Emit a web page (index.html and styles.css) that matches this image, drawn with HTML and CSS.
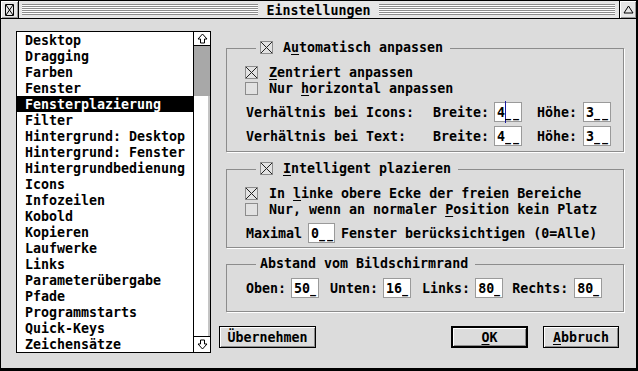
FILE: index.html
```html
<!DOCTYPE html>
<html lang="de">
<head>
  <meta charset="UTF-8"/>
  <title>Einstellungen</title>
  <link rel="stylesheet" href="styles.css">
</head>
<body>

  <div class="window">
    <!-- title bar -->
    <div class="titlebar">
      <div class="closer">
        <svg width="9" height="12" viewBox="0 0 9 12"><path d="M0.5 0.5H8.5V11.5H0.5Z M1 1L8 11 M8 1L1 11" fill="none" stroke="#000"/></svg>
      </div>
      <div class="title">
        <span class="stripes"></span>
        <span class="title-text">Einstellungen</span>
        <span class="stripes"></span>
      </div>
      <div class="fuller">
        <svg width="11" height="9" viewBox="0 0 11 9"><path d="M5.5 1L10 8H1Z" fill="none" stroke="#000"/></svg>
      </div>
    </div>

    <div class="content">
      <!-- category list -->
      <div class="listbox">
        <ul class="items">
          <li>Desktop</li>
          <li>Dragging</li>
          <li>Farben</li>
          <li>Fenster</li>
          <li class="sel">Fensterplazierung</li>
          <li>Filter</li>
          <li>Hintergrund: Desktop</li>
          <li>Hintergrund: Fenster</li>
          <li>Hintergrundbedienung</li>
          <li>Icons</li>
          <li>Infozeilen</li>
          <li>Kobold</li>
          <li>Kopieren</li>
          <li>Laufwerke</li>
          <li>Links</li>
          <li>Parameterübergabe</li>
          <li>Pfade</li>
          <li>Programmstarts</li>
          <li>Quick-Keys</li>
          <li>Zeichensätze</li>
        </ul>
        <div class="scrollbar">
          <div class="arrow up">
            <svg width="11" height="11" viewBox="0 0 11 11"><path d="M5.5 1L10 6H7.5V10H3.5V6H1Z" fill="none" stroke="#000"/></svg>
          </div>
          <div class="track"><div class="thumb"></div></div>
          <div class="arrow down">
            <svg width="11" height="11" viewBox="0 0 11 11"><path d="M5.5 10L10 5H7.5V1H3.5V5H1Z" fill="none" stroke="#000"/></svg>
          </div>
        </div>
      </div>

      <!-- settings -->
      <div class="panel">
        <fieldset class="group g1">
          <legend>
            <span class="check"><svg width="13" height="13" viewBox="0 0 13 13"><path d="M1 1L12 12M12 1L1 12" stroke="#222"/></svg></span>A<u>u</u>tomatisch anpassen
          </legend>
          <div class="crow">
            <span class="check"><svg width="13" height="13" viewBox="0 0 13 13"><path d="M1 1L12 12M12 1L1 12" stroke="#222"/></svg></span><u>Z</u>entriert anpassen
          </div>
          <div class="crow">
            <span class="check"></span>Nur <u>h</u>orizontal anpassen
          </div>
          <div class="frow first">
            <span class="lbl">Verhältnis bei Icons:</span>
            <span>Breite:</span><span class="field f-b">4<span class="caret"></span><span class="us">_</span><span class="us">_</span></span>
            <span class="k-h">Höhe:</span><span class="field f-h">3<span class="us">_</span><span class="us">_</span></span>
          </div>
          <div class="frow">
            <span class="lbl">Verhältnis bei Text:</span>
            <span>Breite:</span><span class="field f-b">4<span class="us">_</span><span class="us">_</span></span>
            <span class="k-h">Höhe:</span><span class="field f-h">3<span class="us">_</span><span class="us">_</span></span>
          </div>
        </fieldset>

        <fieldset class="group g2">
          <legend>
            <span class="check"><svg width="13" height="13" viewBox="0 0 13 13"><path d="M1 1L12 12M12 1L1 12" stroke="#222"/></svg></span><u>I</u>ntelligent plazieren
          </legend>
          <div class="crow">
            <span class="check"><svg width="13" height="13" viewBox="0 0 13 13"><path d="M1 1L12 12M12 1L1 12" stroke="#222"/></svg></span>In <u>l</u>inke obere Ecke der freien Bereiche
          </div>
          <div class="crow">
            <span class="check"></span>Nur, wenn an normaler <u>P</u>osition kein Platz
          </div>
          <div class="frow first">
            <span class="lbl-m">Maximal</span><span class="field f-m">0<span class="us">_</span><span class="us">_</span></span><span class="after-m">Fenster berücksichtigen (0=Alle)</span>
          </div>
        </fieldset>

        <fieldset class="group g3">
          <legend>Abstand vom Bildschirmrand</legend>
          <div class="frow">
            <span class="lbl-m">Oben:</span><span class="field f-e">50<span class="us">_</span></span>
            <span class="k-u">Unten:</span><span class="field f-e">16<span class="us">_</span></span>
            <span class="k-l">Links:</span><span class="field f-e">80<span class="us">_</span></span>
            <span class="k-r">Rechts:</span><span class="field f-r">80<span class="us">_</span></span>
          </div>
        </fieldset>

        <div class="buttons">
          <button class="btn b-apply">Übernehmen</button>
          <button class="btn b-ok"><u>O</u>K</button>
          <button class="btn b-cancel"><u>A</u>bbruch</button>
        </div>
      </div>
    </div>
  </div>

</body>
</html>
```

FILE: styles.css
```css
body {
  margin: 0;
  background-color: #dcdcdc;
  font-family: "DejaVu Sans Mono", "Liberation Mono", monospace;
  font-size: 13.3px;
  font-weight: bold;
  color: #000;
}
.window {
  width: 638px;
  height: 371px;
  box-sizing: border-box;
  border: 1px solid #000;
  border-right-width: 2px;
  border-bottom-width: 3px;
  background-color: #dcdcdc;
  display: flex;
  flex-direction: column;
}

/* title bar */
.titlebar {
  display: flex;
  height: 17px;
  border-bottom: 1px solid #000;
  background-color: #e6e6e6;
}
.closer {
  width: 17px;
  border-right: 1px solid #000;
  display: flex;
  align-items: center;
  justify-content: center;
  box-shadow: inset 1px 1px 0 #fff, inset -1px -1px 0 #9a9a9a;
}
.title {
  flex: 1;
  display: flex;
  align-items: center;
  gap: 8px;
  padding: 0 4px 0 3px;
}
.stripes {
  flex: 1;
  height: 11px;
  background: repeating-linear-gradient(to bottom, #8c8c8c 0 1px, #fff 1px 2px);
}
.title-text {
  line-height: 16px;
  padding-top: 2px;
}
.fuller {
  width: 16px;
  border-left: 1px solid #000;
  display: flex;
  align-items: center;
  justify-content: center;
  box-shadow: inset 1px 1px 0 #fff, inset -1px -1px 0 #9a9a9a;
}

.content {
  flex: 1;
  display: flex;
  align-items: flex-start;
  padding: 12px 0 0 15px;
}

/* list */
.listbox {
  width: 195px;
  height: 322px;
  box-sizing: border-box;
  border: 1px solid #000;
  background-color: #fff;
  display: flex;
}
.items {
  width: 176px;
  margin: 0;
  padding: 0;
  list-style: none;
}
.items li {
  height: 16px;
  box-sizing: border-box;
  padding: 1px 0 0 8px;
  line-height: 16px;
  white-space: nowrap;
}
.items li.sel {
  background-color: #000;
  color: #fff;
}
.scrollbar {
  width: 17px;
  box-sizing: border-box;
  border-left: 1px solid #000;
  display: flex;
  flex-direction: column;
}
.arrow {
  display: flex;
  align-items: center;
  justify-content: center;
  background-color: #fff;
}
.arrow.up {
  height: 13px;
  border-bottom: 1px solid #000;
}
.arrow.down {
  height: 15px;
  border-top: 1px solid #000;
}
.track {
  flex: 1;
  background-color: #fff;
  box-shadow: inset -2px 0 0 #c4c4c4;
}
.thumb {
  height: 50px;
  background-color: #a8a8a8;
}

/* right side */
.panel {
  width: 405px;
  margin: 9px 0 0 8px;
}
.group {
  width: 398px;
  box-sizing: border-box;
  margin: 0 0 0 7px;
  padding: 8px 0 5px 18px;
  border: 1px solid #8c8c8c;
  box-shadow: 1px 1px 0 #fff;
  min-width: 0;
}
.group legend {
  margin-left: 11px;
  padding: 0 7px 0 4px;
  line-height: 16px;
  white-space: nowrap;
}
.g2 {
  margin-top: 9px;
  padding-bottom: 4px;
}
.g3 {
  margin-top: 8px;
  padding: 2px 0 13px 18px;
}
.check {
  display: inline-block;
  width: 13px;
  height: 13px;
  box-sizing: border-box;
  border: 1px solid #8c8c8c;
  background-color: #e2e2e2;
  vertical-align: -2px;
  margin-right: 11px;
}
.check svg {
  display: block;
  margin: -1px;
}
.group legend .check {
  margin-right: 10px;
}
.crow {
  height: 16px;
  box-sizing: border-box;
  padding-top: 1px;
  line-height: 16px;
  white-space: nowrap;
}
.frow {
  height: 20px;
  display: flex;
  align-items: center;
  margin-top: 4px;
  white-space: nowrap;
}
.frow.first {
  margin-top: 6px;
}
.lbl {
  width: 187px;
  margin-left: 1px;
}
.lbl-m {
  margin-left: 1px;
}
.field {
  height: 20px;
  width: 28px;
  box-sizing: border-box;
  border: 1px solid #9a9a9a;
  background-color: #fff;
  padding-left: 2px;
  display: flex;
  align-items: center;
  margin-left: 5px;
}
.us {
  display: inline-block;
  width: 8px;
  transform: scaleX(0.75);
  transform-origin: left center;
}
.f-h { margin-left: 6px; }
.f-m { margin-left: 6px; width: 27px; }
.f-r { margin-left: 6px; }
.after-m { margin-left: 6px; }
.k-h { margin-left: 15px; }
.k-u { margin-left: 11px; }
.k-l { margin-left: 11px; }
.k-r { margin-left: 9px; }
.caret {
  width: 1px;
  height: 22px;
  background-color: #1a1aa0;
  margin-right: -1px;
  flex: none;
}

/* buttons */
.buttons {
  display: flex;
  margin-top: 14px;
  padding-right: 5px;
}
.btn {
  height: 22px;
  box-sizing: border-box;
  border: 1px solid #000;
  background-color: #dcdcdc;
  box-shadow: inset 1px 1px 0 #fff, inset -1px -1px 0 #8c8c8c;
  font: inherit;
  color: #000;
  padding: 2px 0 0;
  text-align: center;
  line-height: 18px;
}
.b-apply { width: 97px; }
.b-ok {
  width: 77px;
  margin-left: auto;
  border-width: 2px;
  padding-top: 1px;
}
.b-cancel {
  width: 76px;
  margin-left: 15px;
}
u {
  text-decoration: underline;
  text-underline-offset: 2px;
}
```
